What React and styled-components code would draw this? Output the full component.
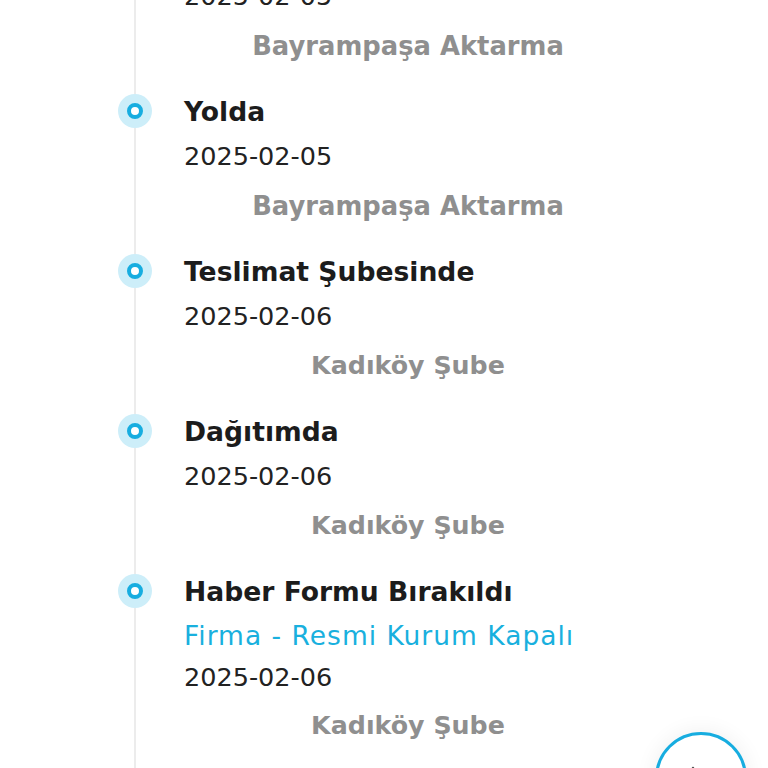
import React from "react";
import styled, { createGlobalStyle } from "styled-components";

const Global = createGlobalStyle`
  html, body { margin: 0; padding: 0; background: #ffffff; overflow: hidden; }
  body { font-family: "DejaVu Sans", "Open Sans", sans-serif; }
`;

const Page = styled.div`
  width: 768px;
  height: 768px;
  overflow: hidden;
  background: #fff;
`;

const List = styled.ul`
  list-style: none;
  margin: -70px 0 0 0;
  padding: 0 136px 0 100px;
`;

const Item = styled.li`
  display: grid;
  grid-template-columns: 70px 1fr;
  column-gap: 14px;
`;

const Marker = styled.div`
  display: flex;
  justify-content: center;
  align-items: flex-start;
  background: linear-gradient(
    to right,
    transparent 34px,
    #ececec 34px,
    #ececec 36px,
    transparent 36px
  );
`;

const Halo = styled.span`
  margin-top: 4px;
  width: 34px;
  height: 34px;
  border-radius: 50%;
  background: #cdeef9;
  display: flex;
  align-items: center;
  justify-content: center;
`;

const Ring = styled.span`
  box-sizing: border-box;
  width: 16px;
  height: 16px;
  border-radius: 50%;
  border: 4px solid #17ade0;
  background: #fff;
`;

const Content = styled.div`
  display: flex;
  flex-direction: column;
  padding-bottom: 16px;
`;

const Title = styled.div`
  font-size: 26.6px;
  font-weight: 700;
  line-height: 44px;
  color: #1c1c1c;
`;

const Note = styled.div`
  font-size: 26.5px;
  font-weight: 400;
  line-height: 43px;
  color: #19b0de;
  letter-spacing: 1px;
`;

const DateText = styled.div`
  font-size: 25.5px;
  font-weight: 400;
  line-height: ${(p) => (p.$tight ? "41px" : "44px")};
  color: #222;
`;

const Location = styled.div`
  font-size: ${(p) => (p.$short ? "25.3px" : "25.8px")};
  font-weight: 700;
  line-height: 56px;
  color: #8f8f8f;
  text-align: center;
`;

const Fab = styled.button`
  position: fixed;
  left: 655px;
  top: 732px;
  box-sizing: border-box;
  width: 92px;
  height: 92px;
  border-radius: 50%;
  border: 3px solid #17ade0;
  background: #fff;
  box-shadow: 0 0 22px rgba(0, 0, 0, 0.07);
  padding: 0;
  display: flex;
  align-items: flex-start;
  justify-content: flex-start;
`;

const FabIcon = styled.svg`
  margin: 30px 0 0 31px;
`;

const events = [
  { title: "Aktarma Merkezinde", date: "2025-02-05", location: "Bayrampaşa Aktarma" },
  { title: "Yolda", date: "2025-02-05", location: "Bayrampaşa Aktarma" },
  { title: "Teslimat Şubesinde", date: "2025-02-06", location: "Kadıköy Şube" },
  { title: "Dağıtımda", date: "2025-02-06", location: "Kadıköy Şube" },
  {
    title: "Haber Formu Bırakıldı",
    note: "Firma - Resmi Kurum Kapalı",
    date: "2025-02-06",
    location: "Kadıköy Şube",
  },
];

export default function App() {
  return (
    <Page>
      <Global />
      <List>
        {events.map((e, i) => (
          <Item key={i}>
            <Marker>
              <Halo>
                <Ring />
              </Halo>
            </Marker>
            <Content>
              <Title>{e.title}</Title>
              {e.note && <Note>{e.note}</Note>}
              <DateText $tight={!!e.note}>{e.date}</DateText>
              <Location $short={e.location.length < 14}>{e.location}</Location>
            </Content>
          </Item>
        ))}
      </List>
      <Fab aria-label="Yardım">
        <FabIcon width="30" height="30" viewBox="0 0 30 30" fill="none">
          <path d="M4 3v10" stroke="#555" strokeWidth="2.5" strokeLinecap="round" />
        </FabIcon>
      </Fab>
    </Page>
  );
}
